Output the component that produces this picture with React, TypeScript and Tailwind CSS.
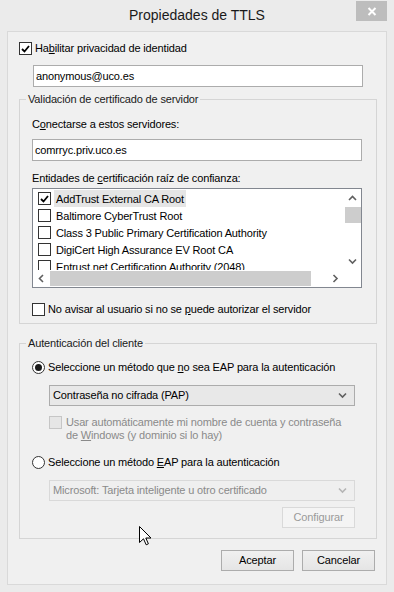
import React from "react";

const font = "font-['Liberation_Sans',Arial,sans-serif]";

function Check({ checked = false, disabled = false }: { checked?: boolean; disabled?: boolean }) {
  return (
    <span
      className={`flex h-[13px] w-[13px] shrink-0 items-center justify-center border ${
        disabled ? "border-[#c6c6c6] bg-[#e6e6e6]" : "border-[#333333] bg-white"
      }`}
    >
      {checked && (
        <svg width="9" height="8" viewBox="0 0 9 8">
          <path d="M1 4 L3.5 6.5 L8 1" stroke="#000" strokeWidth="1.8" fill="none" />
        </svg>
      )}
    </span>
  );
}

function Radio({ checked = false }: { checked?: boolean }) {
  return (
    <span className="flex h-[13px] w-[13px] shrink-0 items-center justify-center rounded-full border border-[#333333] bg-white">
      {checked && <span className="h-[7px] w-[7px] rounded-full bg-[#1a1a1a]" />}
    </span>
  );
}

function Chevron({ dir, color = "#606060" }: { dir: "up" | "down" | "left" | "right"; color?: string }) {
  const pts = {
    up: "1,5 4.5,1.5 8,5",
    down: "1,1.5 4.5,5 8,1.5",
    left: "5,1 1.5,4.5 5,8",
    right: "1.5,1 5,4.5 1.5,8",
  }[dir];
  const vertical = dir === "up" || dir === "down";
  return (
    <svg width={vertical ? 9 : 7} height={vertical ? 7 : 9} viewBox={vertical ? "0 0 9 7" : "0 0 7 9"}>
      <polyline points={pts} stroke={color} strokeWidth="1.6" fill="none" />
    </svg>
  );
}

const certs = [
  "AddTrust External CA Root",
  "Baltimore CyberTrust Root",
  "Class 3 Public Primary Certification Authority",
  "DigiCert High Assurance EV Root CA",
  "Entrust.net Certification Authority (2048)",
];

export default function App() {
  return (
    <div
      className={`relative flex h-[592px] w-[394px] flex-col bg-[#ebebeb] text-[11px] leading-[15px] tracking-[-0.15px] text-black ${font}`}
    >
      {/* title bar */}
      <div className="relative flex h-[31px] shrink-0 items-center justify-center pb-[1px] text-[14px] tracking-normal text-[#1a1a1a]">
        Propiedades de TTLS
        <div className="absolute right-[7px] top-[1px] flex h-[20px] w-[31px] items-center justify-center bg-[#bdbdbd]">
          <svg width="10" height="9" viewBox="0 0 10 9">
            <path d="M1.5 1 L8.5 8 M8.5 1 L1.5 8" stroke="#fff" strokeWidth="2" />
          </svg>
        </div>
      </div>

      {/* client area */}
      <div className="mx-[7px] mb-[7px] flex flex-1 flex-col border border-[#d9d9d9] bg-[#f0f0f0]">
        <label className="ml-[11px] mt-[10px] flex h-[13px] items-center gap-[3px]">
          <Check checked />
          <span>
            Ha<u>b</u>ilitar privacidad de identidad
          </span>
        </label>
        <div className="ml-[25px] mt-[10px] flex h-[22px] w-[330px] items-center border border-[#acacac] bg-white px-[2px]">
          anonymous@uco.es
        </div>

        {/* server validation group */}
        <fieldset className="ml-[11px] mt-[5px] w-[358px] border border-[#d5d5d5] p-0">
          <legend className="ml-[6px] px-[2px] text-[#1a1a1a]">Validación de certificado de servidor</legend>
          <div className="flex flex-col pl-[12px] pt-[10px] pb-[7px]">
            <div>
              C<u>o</u>nectarse a estos servidores:
            </div>
            <div className="mt-[7px] flex h-[22px] w-[330px] items-center border border-[#acacac] bg-white px-[2px]">
              comrryc.priv.uco.es
            </div>
            <div className="mt-[10px]">
              Entidades de <u>c</u>ertificación raíz de confianza:
            </div>
            <div className="mt-[2px] flex h-[100px] w-[330px] flex-col border border-[#828790] bg-white">
              <div className="flex h-[81px]">
                <div className="flex flex-1 flex-col overflow-hidden pt-[1px] pl-[5px]">
                  {certs.map((c, i) => (
                    <div key={c} className="flex h-[17px] shrink-0 items-center whitespace-nowrap">
                      <Check checked={i === 0} />
                      <span
                        className={`ml-[3px] flex h-[17px] items-center px-[2px] pt-[1px] ${i === 0 ? "bg-[#e5e5e5]" : ""}`}
                      >
                        {c}
                      </span>
                    </div>
                  ))}
                </div>
                <div className="flex w-[17px] flex-col items-center">
                  <div className="flex h-[17px] w-full items-center justify-center pt-[2px]">
                    <Chevron dir="up" />
                  </div>
                  <div className="ml-[1px] mt-[1px] h-[16px] w-[16px] bg-[#cdcdcd]" />
                  <div className="flex-1" />
                  <div className="flex h-[17px] w-full items-center justify-center">
                    <Chevron dir="down" />
                  </div>
                </div>
              </div>
              <div className="flex h-[17px] items-center">
                <div className="flex h-full w-[17px] items-center justify-center">
                  <Chevron dir="left" />
                </div>
                <div className="h-[15px] w-[261px] bg-[#cdcdcd]" />
                <div className="flex-1" />
                <div className="flex h-full w-[17px] items-center justify-center">
                  <Chevron dir="right" />
                </div>
                <div className="w-[17px]" />
              </div>
            </div>
            <label className="mt-[15px] flex h-[13px] items-center gap-[3px]">
              <Check />
              <span>
                No avisar al usuario si no se <u>p</u>uede autorizar el servidor
              </span>
            </label>
          </div>
        </fieldset>

        {/* client authentication group */}
        <fieldset className="ml-[11px] mt-[12px] w-[358px] border border-[#d5d5d5] p-0">
          <legend className="ml-[6px] px-[2px] text-[#1a1a1a]">Autenticación del cliente</legend>
          <div className="flex flex-col pl-[12px] pt-[10px] pb-[10px]">
            <label className="flex h-[13px] items-center gap-[3px]">
              <Radio checked />
              <span>
                Seleccione un método que <u>n</u>o sea EAP para la autenticación
              </span>
            </label>
            <div className="ml-[17px] mt-[11px] flex h-[21px] w-[306px] items-center justify-between border border-[#acacac] bg-[#e8e8e8] pl-[3px] pr-[7px]">
              <span>Contraseña no cifrada (PAP)</span>
              <Chevron dir="down" />
            </div>
            <label className="ml-[17px] mt-[10px] flex items-start gap-[4px] leading-[13px] text-[#8a8a8a]">
              <Check disabled />
              <span>
                Usar automáticamente mi nombre de cuenta y contraseña
                <br />
                de <u>W</u>indows (y dominio si lo hay)
              </span>
            </label>
            <label className="mt-[14px] flex h-[13px] items-center gap-[3px]">
              <Radio />
              <span>
                Seleccione un método <u>E</u>AP para la autenticación
              </span>
            </label>
            <div className="ml-[17px] mt-[11px] flex h-[21px] w-[306px] items-center justify-between border border-[#d9d9d9] bg-[#efefef] pl-[3px] pr-[7px] text-[#8a8a8a]">
              <span>Microsoft: Tarjeta inteligente u otro certificado</span>
              <Chevron dir="down" color="#b5b5b5" />
            </div>
            <div className="mt-[6px] flex w-[323px] justify-end">
              <div className="flex h-[21px] w-[73px] items-center justify-center border border-[#d9d9d9] bg-[#f4f4f4] text-[#9a9a9a]">
                Confi<u>g</u>urar
              </div>
            </div>
          </div>
        </fieldset>

        <div className="mr-[11px] mt-[11px] flex justify-end gap-[8px]">
          <button className="flex h-[21px] w-[73px] items-center justify-center border border-[#acacac] bg-gradient-to-b from-[#f0f0f0] to-[#e5e5e5]">
            Aceptar
          </button>
          <button className="flex h-[21px] w-[73px] items-center justify-center border border-[#acacac] bg-gradient-to-b from-[#f0f0f0] to-[#e5e5e5]">
            Cancelar
          </button>
        </div>
      </div>

      {/* mouse pointer */}
      <svg className="absolute left-[139px] top-[526px]" width="13" height="20" viewBox="0 0 13 20">
        <path
          d="M0.5 0.5 L0.5 16.5 L4.5 12.8 L7.2 18.8 L9.4 17.8 L6.8 12 L12 12 Z"
          fill="#fff"
          stroke="#000"
          strokeWidth="1"
        />
      </svg>
    </div>
  );
}
